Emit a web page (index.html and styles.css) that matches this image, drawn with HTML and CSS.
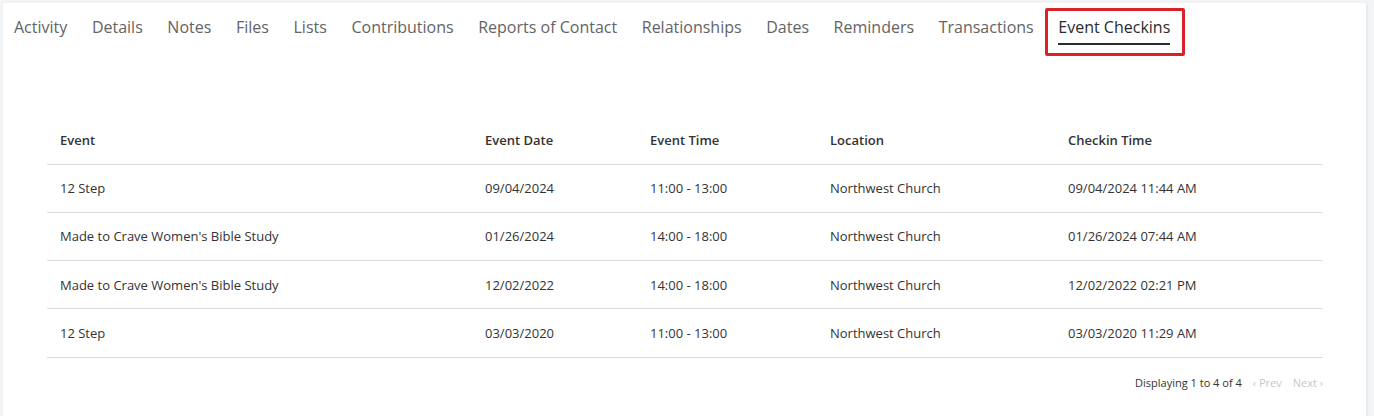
FILE: index.html
```html
<!DOCTYPE html>
<html lang="en">

<head>
    <meta charset="UTF-8">
    <meta name="viewport" content="width=device-width, initial-scale=1.0">
    <title>Event Checkins</title>
    <link rel="stylesheet" href="styles.css">
</head>

<body>
    <section class="card">
        <nav class="tabs">
            <a href="#">Activity</a>
            <a href="#">Details</a>
            <a href="#">Notes</a>
            <a href="#">Files</a>
            <a href="#">Lists</a>
            <a href="#">Contributions</a>
            <a href="#">Reports of Contact</a>
            <a href="#">Relationships</a>
            <a href="#">Dates</a>
            <a href="#">Reminders</a>
            <a href="#">Transactions</a>
            <a href="#" class="active">Event Checkins</a>
        </nav>

        <div class="tableWrap">
            <table>
                <thead>
                    <tr>
                        <th class="colEvent">Event</th>
                        <th class="colDate">Event Date</th>
                        <th class="colTime">Event Time</th>
                        <th class="colLocation">Location</th>
                        <th>Checkin Time</th>
                    </tr>
                </thead>
                <tbody>
                    <tr>
                        <td>12 Step</td>
                        <td>09/04/2024</td>
                        <td>11:00 - 13:00</td>
                        <td>Northwest Church</td>
                        <td>09/04/2024 11:44 AM</td>
                    </tr>
                    <tr>
                        <td>Made to Crave Women's Bible Study</td>
                        <td>01/26/2024</td>
                        <td>14:00 - 18:00</td>
                        <td>Northwest Church</td>
                        <td>01/26/2024 07:44 AM</td>
                    </tr>
                    <tr>
                        <td>Made to Crave Women's Bible Study</td>
                        <td>12/02/2022</td>
                        <td>14:00 - 18:00</td>
                        <td>Northwest Church</td>
                        <td>12/02/2022 02:21 PM</td>
                    </tr>
                    <tr>
                        <td>12 Step</td>
                        <td>03/03/2020</td>
                        <td>11:00 - 13:00</td>
                        <td>Northwest Church</td>
                        <td>03/03/2020 11:29 AM</td>
                    </tr>
                </tbody>
            </table>

            <div class="pager">
                <span class="count">Displaying 1 to 4 of 4</span>
                <span class="pageLink">&lsaquo; Prev</span>
                <span class="pageLink">Next &rsaquo;</span>
            </div>
        </div>
    </section>
</body>

</html>
```

FILE: styles.css
```css
* {
    box-sizing: border-box;
    margin: 0;
    padding: 0;
}

body {
    background-color: #f3f4f6;
    font-family: "Open Sans", "Liberation Sans", sans-serif;
    color: #333;
    padding: 3px 8px 0 3px;
}

.card {
    background-color: #fff;
    height: 420px;
    box-shadow: 1px 1px 3px rgba(0, 0, 0, 0.08);
}

.tabs {
    display: flex;
    gap: 24.6px;
    padding: 13px 0 0 11px;
    height: 60px;
}

.tabs a {
    position: relative;
    font-size: 16px;
    line-height: 22px;
    color: #646464;
    text-decoration: none;
    height: 29px;
    white-space: nowrap;
}

.tabs a.active {
    color: #2b2b2b;
    border-bottom: 2px solid #2b2b2b;
}

/* red highlight box round the active tab */
.tabs a.active::after {
    content: "";
    position: absolute;
    left: -13px;
    right: -15px;
    top: -8px;
    bottom: -13px;
    border: 3px solid #d9222a;
    border-radius: 2px;
}

.tableWrap {
    padding: 52px 43px 0 44px;
}

table {
    width: 100%;
    border-collapse: collapse;
    font-size: 13px;
}

th {
    text-align: left;
    font-weight: 600;
    color: #333;
    height: 49px;
    padding: 1px 13px 0;
    border-bottom: 1px solid #dcdcdc;
}

td {
    height: 48.3px;
    padding: 0 13px;
    color: #333;
    border-bottom: 1px solid #dcdcdc;
}

.colEvent {
    width: 425px;
}

.colDate {
    width: 165px;
}

.colTime {
    width: 180px;
}

.colLocation {
    width: 238px;
}

.pager {
    display: flex;
    justify-content: flex-end;
    gap: 11px;
    font-size: 11px;
    padding: 17px 0 0 0;
}

.pageLink {
    color: #c8c8c8;
}
```
